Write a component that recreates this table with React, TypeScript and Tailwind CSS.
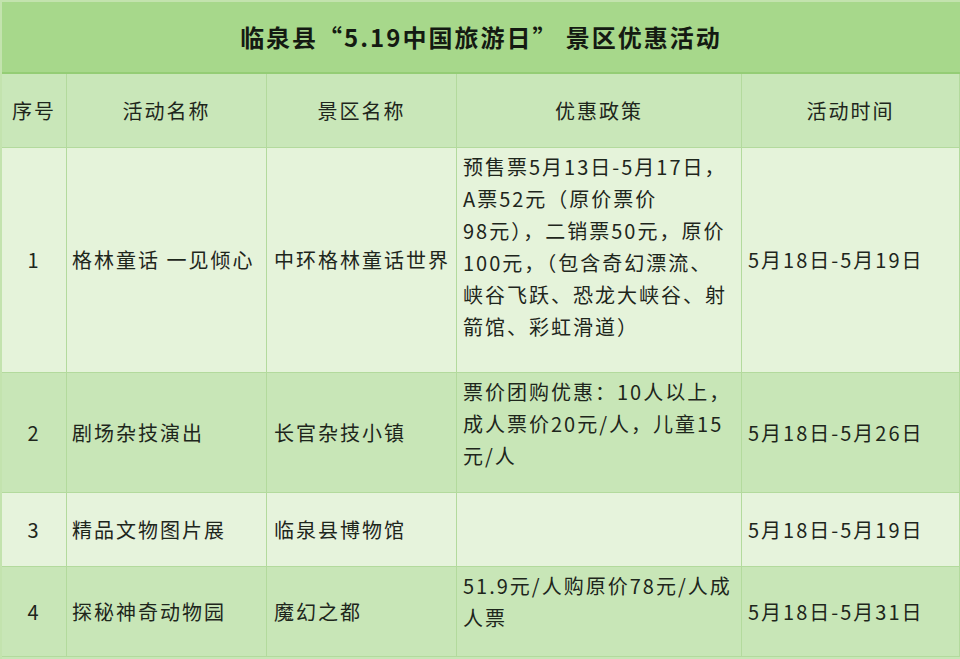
import React from 'react';

const font = '"Noto Sans CJK SC", "Noto Sans", sans-serif';

type Row = {
  no: string;
  name: string;
  spot: string;
  policy: string[];
  time: string;
  h: string;
  bg: string;
};

const rows: Row[] = [
  {
    no: '1',
    name: '格林童话 一见倾心',
    spot: '中环格林童话世界',
    policy: [
      '预售票5月13日-5月17日，',
      'A票52元（原价票价',
      '98元），二销票50元，原价',
      '100元，（包含奇幻漂流、',
      '峡谷飞跃、恐龙大峡谷、射',
      '箭馆、彩虹滑道）',
    ],
    time: '5月18日-5月19日',
    h: 'h-[225px]',
    bg: 'bg-[#e5f3da]',
  },
  {
    no: '2',
    name: '剧场杂技演出',
    spot: '长官杂技小镇',
    policy: ['票价团购优惠：10人以上，', '成人票价20元/人，儿童15', '元/人'],
    time: '5月18日-5月26日',
    h: 'h-[120px]',
    bg: 'bg-[#c8e6b7]',
  },
  {
    no: '3',
    name: '精品文物图片展',
    spot: '临泉县博物馆',
    policy: [],
    time: '5月18日-5月19日',
    h: 'h-[74px]',
    bg: 'bg-[#e6f3dc]',
  },
  {
    no: '4',
    name: '探秘神奇动物园',
    spot: '魔幻之都',
    policy: ['51.9元/人购原价78元/人成', '人票'],
    time: '5月18日-5月31日',
    h: 'h-[90px]',
    bg: 'bg-[#c8e6b7]',
  },
];

const cols = 'grid grid-cols-[65px_200px_190px_285px_218px]';
const cell = 'border-r border-b border-[#b3da9d]';

export default function App() {
  return (
    <div
      className="w-[960px] h-[659px] overflow-hidden bg-[#c8e6b7] text-[#1e261c] border-l-2 border-t-2 border-[#c3e3ae] tracking-[2px]"
      style={{ fontFamily: font }}
    >
      <div className="h-[72px] flex items-center justify-center bg-[#a7d88b] border-b-2 border-[#94cd75]">
        <h1 className="text-[24px] font-bold leading-none text-[#141a12] tracking-[2px]">
          临泉县“5.19中国旅游日” 景区优惠活动
        </h1>
      </div>

      <div className={`${cols} h-[74px] bg-[#c9e7b9] text-[20px]`}>
        {['序号', '活动名称', '景区名称', '优惠政策', '活动时间'].map((t) => (
          <div key={t} className={`${cell} flex items-center justify-center`}>
            {t}
          </div>
        ))}
      </div>

      {rows.map((r) => (
        <div key={r.no} className={`${cols} ${r.h} ${r.bg} text-[20px] leading-[32px]`}>
          <div className={`${cell} flex items-center justify-center`}>{r.no}</div>
          <div className={`${cell} flex items-center pl-[5px]`}>{r.name}</div>
          <div className={`${cell} flex items-center pl-[7px]`}>{r.spot}</div>
          <div className={`${cell} pl-[6px] pt-[3px] flex flex-col`}>
            {r.policy.map((l) => (
              <span key={l} className="whitespace-nowrap">
                {l}
              </span>
            ))}
          </div>
          <div className={`${cell} flex items-center pl-[6px]`}>{r.time}</div>
        </div>
      ))}
    </div>
  );
}
